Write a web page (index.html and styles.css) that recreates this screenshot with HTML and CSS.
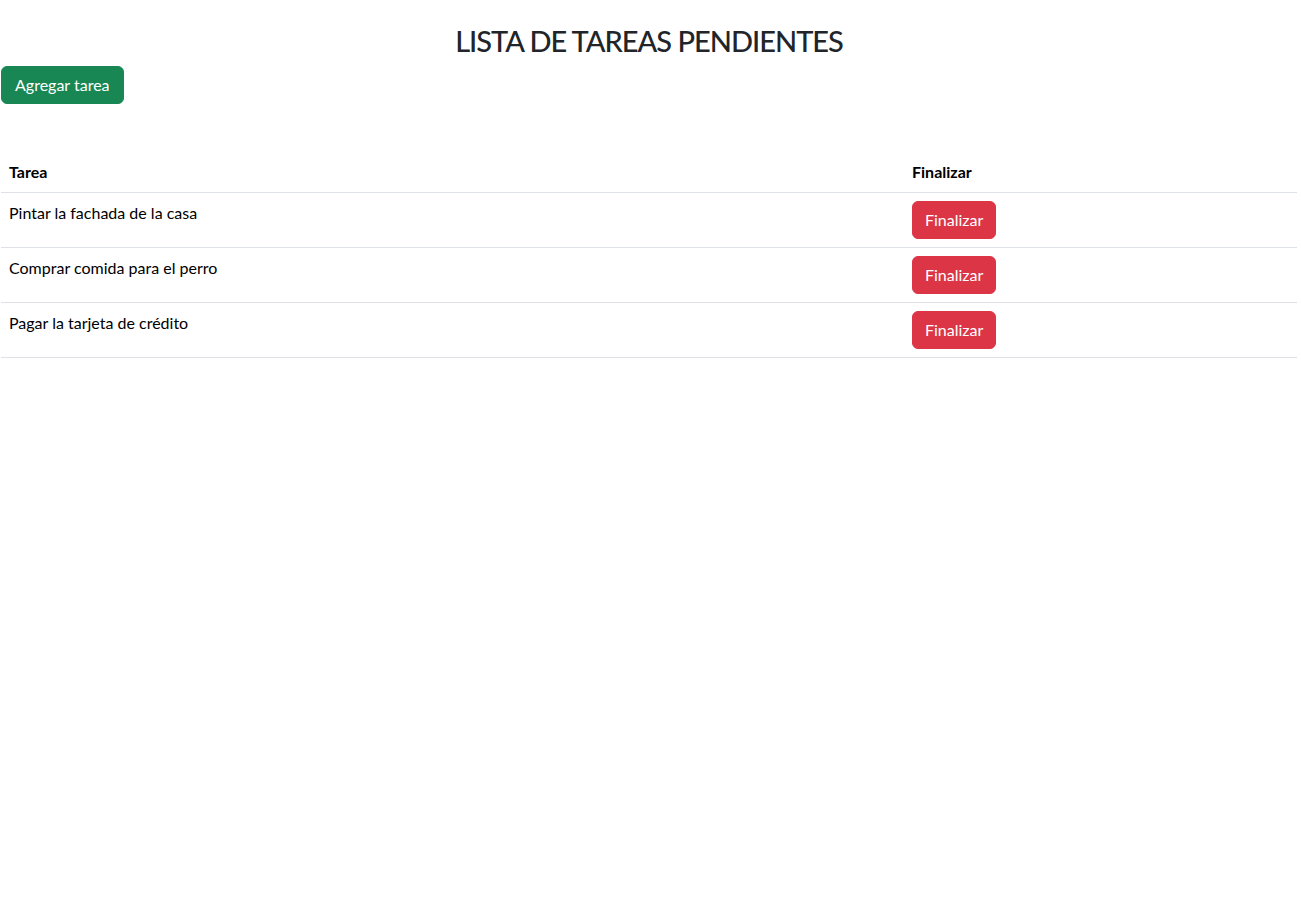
FILE: index.html
```html
<!DOCTYPE html>
<html lang="es">
<head>
<meta charset="utf-8">
<title>Lista de tareas</title>
<link rel="stylesheet" href="styles.css">
</head>
<body>
<div class="page">
  <h2 class="title">LISTA DE TAREAS PENDIENTES</h2>
  <button class="btn btn-success">Agregar tarea</button>
  <table class="tasks">
    <thead>
      <tr><th class="col-task">Tarea</th><th>Finalizar</th></tr>
    </thead>
    <tbody>
      <tr><td>Pintar la fachada de la casa</td><td><button class="btn btn-danger">Finalizar</button></td></tr>
      <tr><td>Comprar comida para el perro</td><td><button class="btn btn-danger">Finalizar</button></td></tr>
      <tr><td>Pagar la tarjeta de crédito</td><td><button class="btn btn-danger">Finalizar</button></td></tr>
    </tbody>
  </table>
</div>
</body>
</html>
```
FILE: styles.css
```css
* { box-sizing: border-box; }
html, body { margin: 0; padding: 0; background: #fff; }
body {
  font-family: "Lato", "Noto Sans", sans-serif;
  font-size: 16px;
  line-height: 1.5;
  color: #212529;
}
.page {
  padding: 22px 4px 0 1px;
}
.title {
  margin: 0 0 6px;
  text-align: center;
  font-size: 29px;
  font-weight: 500;
  letter-spacing: -1px;
  line-height: 38px;
  color: #212529;
}
.btn {
  display: inline-block;
  font-family: inherit;
  font-size: 16px;
  line-height: 24px;
  padding: 6px 12px;
  border: 1px solid transparent;
  border-radius: 6px;
  color: #fff;
  cursor: pointer;
}
.btn-success {
  background: #198754;
  border-color: #198754;
  padding: 6px 13px;
}
.btn-danger { background: #dc3545; border-color: #dc3545; }
.tasks {
  width: 100%;
  margin-top: 48px;
  border-collapse: collapse;
  vertical-align: top;
  color: #000;
}
.tasks th, .tasks td {
  padding: 8px;
  text-align: left;
  vertical-align: top;
  border-bottom: 1px solid #dee2e6;
}
.tasks th { font-weight: 700; }
.col-task { width: 903px; }
.tasks td .btn { display: block; }
```
